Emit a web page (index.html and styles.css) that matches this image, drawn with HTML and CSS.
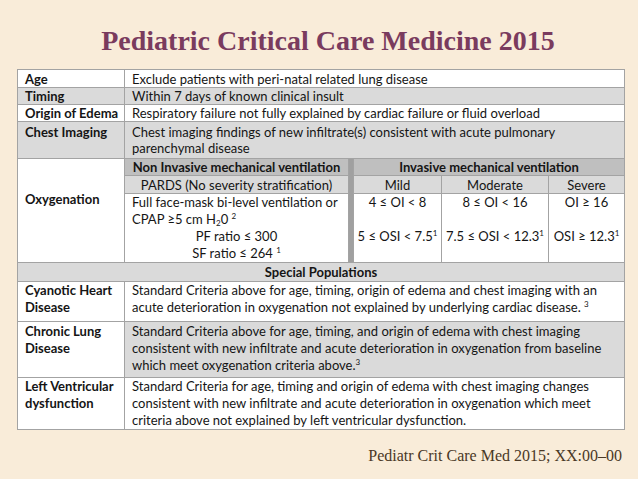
FILE: index.html
```html
<!DOCTYPE html>
<html lang="en">
<head>
<meta charset="utf-8">
<title>Pediatric Critical Care Medicine 2015</title>
<link rel="stylesheet" href="styles.css">
</head>
<body>
<h1 class="title">Pediatric Critical Care Medicine 2015</h1>
<table class="crit">
  <colgroup>
    <col class="c-label"><col class="c-niv"><col class="c-sep"><col class="c-mild"><col class="c-mod"><col class="c-sev">
  </colgroup>
  <tbody>
    <tr class="white r-first"><th>Age</th><td colspan="5">Exclude patients with peri-natal related lung disease</td></tr>
    <tr class="gray"><th>Timing</th><td colspan="5">Within 7 days of known clinical insult</td></tr>
    <tr class="white"><th>Origin of Edema</th><td colspan="5">Respiratory failure not fully explained by cardiac failure or fluid overload</td></tr>
    <tr class="gray r-chest"><th>Chest Imaging</th><td colspan="5">Chest imaging findings of new infiltrate(s) consistent with acute pulmonary<br>parenchymal disease</td></tr>
    <tr>
      <th rowspan="3" class="oxy">Oxygenation</th>
      <td class="hd">Non Invasive mechanical ventilation</td>
      <td rowspan="3" class="sep"></td>
      <td colspan="3" class="hd">Invasive mechanical ventilation</td>
    </tr>
    <tr class="r-sub">
      <td class="sh">PARDS (No severity stratification)</td>
      <td class="sh">Mild</td>
      <td class="sh">Moderate</td>
      <td class="sh">Severe</td>
    </tr>
    <tr class="vals">
      <td class="niv">
        <div>Full face-mask bi-level ventilation or</div>
        <div>CPAP ≥5 cm H<sub>2</sub>0 <sup>2</sup></div>
        <div class="ctr">PF ratio ≤ 300</div>
        <div class="ctr">SF ratio ≤ 264 <sup>1</sup></div>
      </td>
      <td class="iv"><div>4 ≤ OI &lt; 8</div><div class="low">5 ≤ OSI &lt; 7.5<sup>1</sup></div></td>
      <td class="iv"><div>8 ≤ OI &lt; 16</div><div class="low">7.5 ≤ OSI &lt; 12.3<sup>1</sup></div></td>
      <td class="iv"><div>OI ≥ 16</div><div class="low">OSI ≥ 12.3<sup>1</sup></div></td>
    </tr>
    <tr class="gray"><td colspan="6" class="special">Special Populations</td></tr>
    <tr class="white r-cyan"><th>Cyanotic Heart<br>Disease</th><td colspan="5">Standard Criteria above for age, timing, origin of edema and chest imaging with an<br>acute deterioration in oxygenation not explained by underlying cardiac disease. <sup>3</sup></td></tr>
    <tr class="mixed r-chronic"><th>Chronic Lung<br>Disease</th><td colspan="5">Standard Criteria above for age, timing, and origin of edema with chest imaging<br>consistent with new infiltrate and acute deterioration in oxygenation from baseline<br>which meet oxygenation criteria above.<sup>3</sup></td></tr>
    <tr class="white r-lv"><th>Left Ventricular<br>dysfunction</th><td colspan="5">Standard Criteria for age, timing and origin of edema with chest imaging changes<br>consistent with new infiltrate and acute deterioration in oxygenation which meet<br>criteria above not explained by left ventricular dysfunction.</td></tr>
  </tbody>
</table>
<p class="cite">Pediatr Crit Care Med 2015; XX:00–00</p>
</body>
</html>
```

FILE: styles.css
```css
html, body {
  margin: 0;
  padding: 0;
}
body {
  width: 638px;
  height: 479px;
  overflow: hidden;
  background: #f9ecd9;
}
.title {
  margin: 25px 0 12px;
  padding-left: 18px;
  font-family: "Liberation Serif", "Times New Roman", serif;
  font-weight: bold;
  font-size: 28px;
  line-height: 32px;
  color: #7a3b5e;
  text-align: center;
}
.crit {
  margin-left: 17px;
  width: 607px;
  table-layout: fixed;
  border-collapse: collapse;
  border: 1px solid #939393;
  font-family: Lato, "Open Sans", sans-serif;
  font-size: 13px;
  line-height: 16px;
  color: #151515;
  background: #ffffff;
}
.c-label { width: 107px; }
.c-niv { width: 224px; }
.c-sep { width: 5px; }
.c-mild { width: 88px; }
.c-mod { width: 107px; }
.c-sev { width: 76px; }
.crit th, .crit td {
  border: 1px solid #a3a3a3;
  padding: 0 7px;
  vertical-align: top;
  text-align: left;
  white-space: nowrap;
}
.crit th {
  font-weight: bold;
}
.r-first th, .r-first td {
  padding-top: 1px;
}
.r-chest th, .r-chest td {
  padding-top: 2px;
  padding-bottom: 2px;
}
.r-sub td {
  padding-top: 1px;
}
.r-cyan th, .r-cyan td {
  line-height: 17px;
  padding-bottom: 5px;
}
.r-chronic th, .r-chronic td {
  line-height: 17px;
  padding-top: 1px;
  padding-bottom: 3px;
}
.r-lv th, .r-lv td {
  line-height: 17px;
}
.gray th, .gray td, .mixed td {
  background: #dadada;
}
.white th, .white td, .mixed th {
  background: #ffffff;
}
.crit th.oxy {
  background: #ffffff;
  padding-top: 32px;
}
.crit td.hd {
  background: #bfbfbf;
  font-weight: bold;
  text-align: center;
}
.crit td.sh {
  background: #dadada;
  text-align: center;
}
.crit td.sep {
  background: #a0a0a0;
  padding: 0;
}
.vals td {
  background: #ffffff;
  line-height: 17px;
}
.ctr { text-align: center; }
.crit td.iv {
  text-align: center;
  padding-left: 2px;
  padding-right: 2px;
}
.low { margin-top: 17px; }
.crit td.special {
  text-align: center;
  font-weight: bold;
  padding-top: 1px;
  padding-bottom: 1px;
}
sup {
  font-size: 8px;
  line-height: 0;
  vertical-align: 5px;
}
sub {
  font-size: 8px;
  line-height: 0;
  vertical-align: -2px;
}
.cite {
  margin: 16px 16px 0 0;
  font-family: "Liberation Serif", "Times New Roman", serif;
  font-size: 16px;
  line-height: 20px;
  color: #4a3826;
  text-align: right;
}
```
